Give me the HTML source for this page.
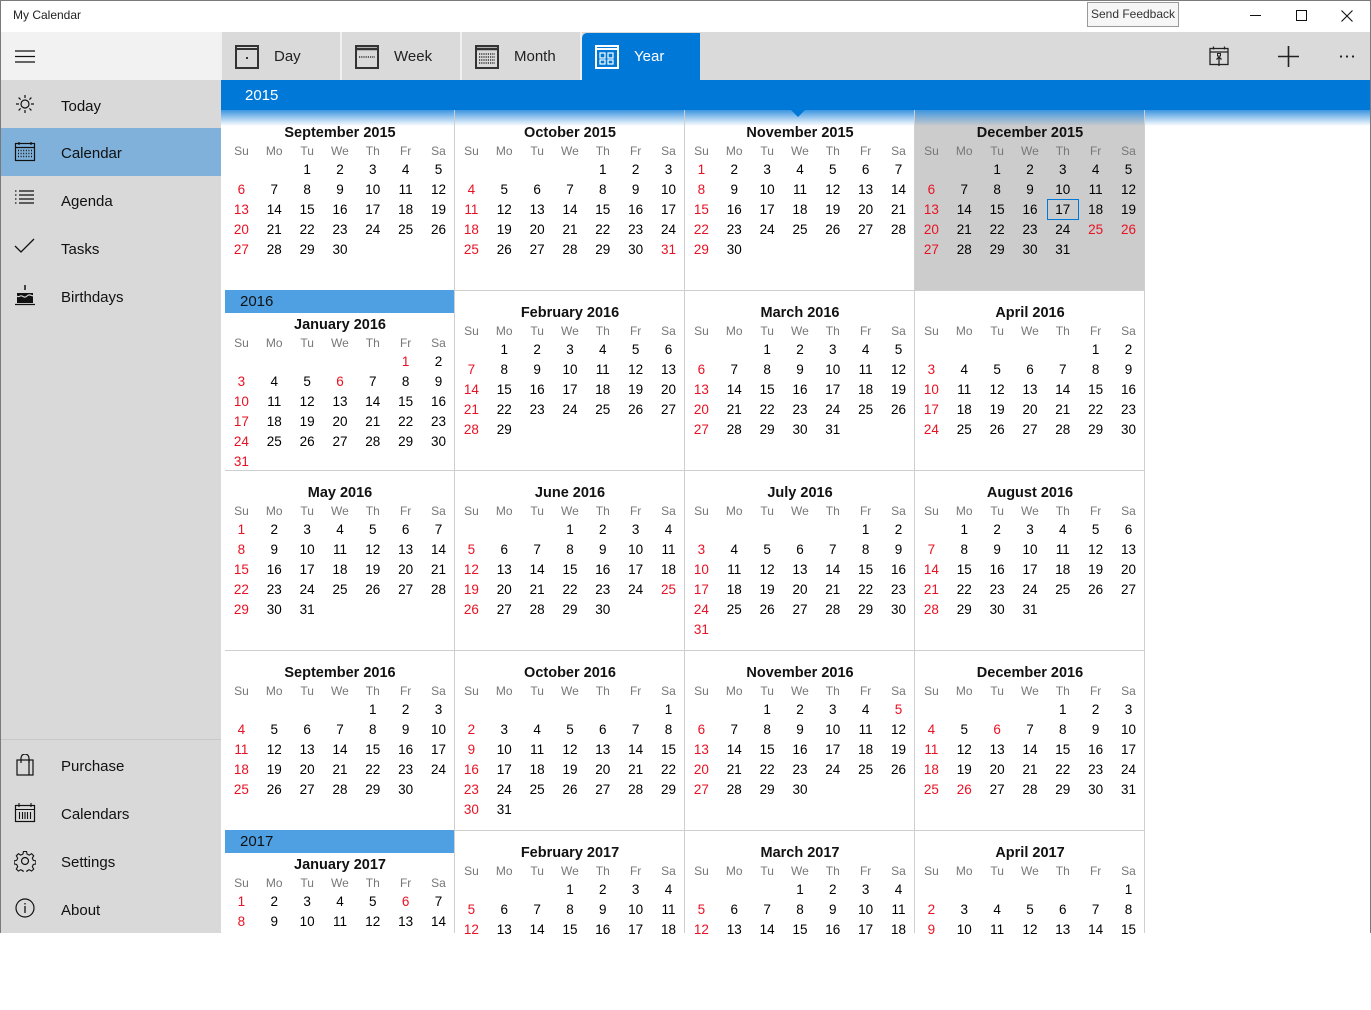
<!DOCTYPE html>
<html><head><meta charset="utf-8"><style>
*{margin:0;padding:0;box-sizing:border-box}
body{width:1371px;height:933px;overflow:hidden;background:#fff;font-family:"Liberation Sans",sans-serif;position:relative;color:#000}
.abs{position:absolute}
#win{position:absolute;left:0;top:0;width:1371px;height:933px;border:1px solid #7a7a7a;border-bottom:none;pointer-events:none;z-index:50}
#side{left:0;top:32px;width:221px;height:901px;background:#d9d9d9}
.it{position:absolute;left:0;width:221px;height:48px;font-size:15px;line-height:52px;padding-left:61px;color:#111}
.it svg{position:absolute;left:14px;top:13px}
.tab{position:absolute;top:33px;height:47px;width:118px;background:#dadada;border-top-left-radius:5px;font-size:15px;line-height:47px;padding-left:52px;color:#222}
.tab svg{position:absolute;left:13px;top:12px}
.m{position:absolute;width:230px;height:180px}
.t{position:absolute;left:0;width:230px;text-align:center;font-weight:bold;font-size:14.5px;line-height:20px;color:#111}
.g{position:absolute;left:0;width:230px;display:grid;grid-template-columns:repeat(7,32.857px);grid-template-rows:18px;grid-auto-rows:20px;font-size:13.5px;text-align:center;line-height:20px}
.g i,.g u{font-style:normal;text-decoration:none}
.g u{color:#e81123}
.g b{font-weight:normal;color:#777;font-size:12px;line-height:17px;height:18px;padding-top:1px}
.vl{position:absolute;top:110px;width:1px;height:823px;background:#cfcfcf}
.hl{position:absolute;left:225px;width:920px;height:1px;background:#cfcfcf}
.yb{position:absolute;left:225px;width:229px;height:23px;background:#4ea0e2;font-size:15px;line-height:24px;padding-left:15px;color:#111}
</style></head><body>
<div id="win"></div>
<div class="abs" style="left:13px;top:8px;font-size:12px;color:#222">My Calendar</div>
<div class="abs" style="left:1087px;top:2px;width:92px;height:25px;border:1px solid #9a9a9a;background:#f6f6f6;font-size:12px;line-height:23px;text-align:center;color:#333">Send Feedback</div>
<div class="abs" style="left:1250px;top:15px;width:11px;height:1px;background:#111"></div>
<div class="abs" style="left:1296px;top:10px;width:11px;height:11px;border:1px solid #111"></div>
<svg class="abs" style="left:1341px;top:10px" width="12" height="12"><path d="M0.5 0.5L11.5 11.5M11.5 0.5L0.5 11.5" stroke="#111" stroke-width="1.1"/></svg>

<div id="side" class="abs">
 <div class="abs" style="left:0;top:0;width:221px;height:48px;background:#f2f2f2"></div>
 <svg class="abs" style="left:15px;top:18px" width="21" height="13"><path d="M0 1H20M0 6.5H20M0 12H20" stroke="#111" stroke-width="1.2"/></svg>
 <div class="it" style="top:49px"><svg width="22" height="22"><circle cx="11" cy="10" r="4" fill="none" stroke="#111" stroke-width="1.2"/><path d="M11 1v3M11 16v3M2 10h3M17 10h3M4.6 3.6l2 2M15.4 14.4l2 2M4.6 16.4l2-2M15.4 5.6l2-2" stroke="#111" stroke-width="1.2"/></svg>Today</div>
 <div class="it" style="top:96px;background:#7fb1da"><svg width="22" height="22"><rect x="1.5" y="2.5" width="19" height="17" fill="none" stroke="#111" stroke-width="1.2"/><path d="M1.5 6.5h19M5 1v3M17 1v3" stroke="#111" stroke-width="1.2"/><path d="M4 9.5h14M4 12.5h14M4 15.5h14" stroke="#111" stroke-width="1.5" stroke-dasharray="1 1.6"/></svg>Calendar</div>
 <div class="it" style="top:144px"><svg width="22" height="22"><path d="M1 3h1.5M5 3h15M1 7h1.5M5 7h15M1 11h1.5M5 11h15M1 15h1.5M5 15h15" stroke="#111" stroke-width="1.2" transform="translate(0,-1)"/></svg>Agenda</div>
 <div class="it" style="top:192px"><svg width="22" height="22"><path d="M1 9l6 6L20 2" fill="none" stroke="#111" stroke-width="1.3"/></svg>Tasks</div>
 <div class="it" style="top:240px"><svg width="22" height="22"><path d="M11 0v5" stroke="#111" stroke-width="1.5"/><rect x="3" y="8" width="16" height="10" fill="#111"/><path d="M3 11c2 2 3-1 5 0s3 2 5 0 3-1 6 0" stroke="#d9d9d9" stroke-width="1.2" fill="none"/><path d="M1 19.5h20" stroke="#111" stroke-width="1.2"/></svg>Birthdays</div>
 <div class="abs" style="left:0;top:707px;width:221px;height:1px;background:#c8c8c8"></div>
 <div class="it" style="top:709px"><svg width="22" height="22"><rect x="3" y="6" width="16" height="15" fill="none" stroke="#111" stroke-width="1.2"/><path d="M7 9V4a4 4 0 0 1 8 0v5" fill="none" stroke="#111" stroke-width="1.2"/><path d="M15 6v15" stroke="#111" stroke-width="1.2"/></svg>Purchase</div>
 <div class="it" style="top:757px"><svg width="22" height="22"><rect x="1.5" y="3.5" width="19" height="16" fill="none" stroke="#111" stroke-width="1.2"/><path d="M1.5 7.5h19M5 1v4M17 1v4M5.5 10v7M8.5 10v7M11 10v7M13.5 10v7M16.5 10v7" stroke="#111" stroke-width="1.1"/></svg>Calendars</div>
 <div class="it" style="top:805px"><svg width="22" height="22"><circle cx="11" cy="11" r="3.5" fill="none" stroke="#111" stroke-width="1.2"/><path d="M9.5 1.5h3l.6 2.6 2.2 1 2.3-1.4 2.1 2.1-1.4 2.3 1 2.2 2.6.6v3l-2.6.6-1 2.2 1.4 2.3-2.1 2.1-2.3-1.4-2.2 1-.6 2.6h-3l-.6-2.6-2.2-1-2.3 1.4-2.1-2.1 1.4-2.3-1-2.2-2.6-.6v-3l2.6-.6 1-2.2-1.4-2.3 2.1-2.1 2.3 1.4 2.2-1z" fill="none" stroke="#111" stroke-width="1.1"/></svg>Settings</div>
 <div class="it" style="top:853px"><svg width="22" height="22"><circle cx="11" cy="10" r="9" fill="none" stroke="#111" stroke-width="1.2"/><path d="M11 8v7M11 5v1.5" stroke="#111" stroke-width="1.3"/></svg>About</div>
</div>

<div class="abs" style="left:221px;top:32px;width:1150px;height:48px;background:#dadada"></div>
<div class="abs" style="left:221px;top:32px;width:1px;height:48px;background:#f0f0f0"></div>
<div class="tab" style="left:222px"><svg width="24" height="24"><rect x="1" y="1" width="22" height="22" fill="none" stroke="#333" stroke-width="2"/><path d="M1 4h22" stroke="#333" stroke-width="2"/><rect x="11" y="12" width="2" height="2" fill="#333"/></svg>Day</div>
<div class="abs" style="left:340px;top:32px;width:2px;height:48px;background:#f0f0f0"></div>
<div class="tab" style="left:342px"><svg width="24" height="24"><rect x="1" y="1" width="22" height="22" fill="none" stroke="#333" stroke-width="2"/><path d="M1 4h22" stroke="#333" stroke-width="2.5"/><path d="M4 12h16" stroke="#333" stroke-width="1.5" stroke-dasharray="1.2 1"/></svg>Week</div>
<div class="abs" style="left:460px;top:32px;width:2px;height:48px;background:#f0f0f0"></div>
<div class="tab" style="left:462px"><svg width="24" height="24"><rect x="1" y="1" width="22" height="22" fill="none" stroke="#333" stroke-width="2"/><path d="M1 4h22" stroke="#333" stroke-width="2.5"/><path d="M4 9h16M4 12h16M4 15h16M4 18h16" stroke="#333" stroke-width="1.5" stroke-dasharray="1.2 1"/></svg>Month</div>
<div class="abs" style="left:580px;top:32px;width:2px;height:48px;background:#f0f0f0"></div>
<div class="tab" style="left:582px;background:#0078d7;color:#fff"><svg width="24" height="24"><rect x="1" y="1" width="22" height="22" fill="none" stroke="#fff" stroke-width="2"/><path d="M1 4h22" stroke="#fff" stroke-width="2"/><rect x="5" y="8" width="5" height="5" fill="none" stroke="#fff" stroke-width="1.2"/><rect x="13" y="8" width="5" height="5" fill="none" stroke="#fff" stroke-width="1.2"/><rect x="5" y="15" width="5" height="4" fill="none" stroke="#fff" stroke-width="1.2"/><rect x="13" y="15" width="5" height="4" fill="none" stroke="#fff" stroke-width="1.2"/></svg>Year</div>
<svg class="abs" style="left:1209px;top:46px" width="20" height="21"><rect x="1" y="2.5" width="18" height="16" fill="none" stroke="#222" stroke-width="1.3"/><path d="M1 6h18M4.5 0.5v3M15.5 0.5v3M10 20v-9M7.5 13.5l2.5-2.5 2.5 2.5" fill="none" stroke="#222" stroke-width="1.3"/><rect x="8.5" y="7.5" width="3" height="2.5" fill="none" stroke="#222" stroke-width="1"/></svg>
<svg class="abs" style="left:1278px;top:46px" width="21" height="21"><path d="M10.5 0v21M0 10.5h21" stroke="#222" stroke-width="1.6"/></svg>
<div class="abs" style="left:1338px;top:55px;width:18px;height:3px;background:radial-gradient(circle,#222 1px,transparent 1.3px) 0 0/6px 3px"></div>

<div class="abs" style="left:221px;top:80px;width:1150px;height:30px;background:#0078d7;color:#fff;font-size:15px;line-height:32px;padding-left:24px">2015</div>
<div class="abs" style="left:221px;top:110px;width:1150px;height:16px;background:linear-gradient(#3c95e0,rgba(255,255,255,0))"></div>
<svg class="abs" style="left:791px;top:110px" width="14" height="7"><path d="M0 0h14L7 7z" fill="#0078d7"/></svg>

<div class="abs" style="left:915px;top:110px;width:229px;height:180px;background:#cccccc"></div>
<div class="abs" style="left:915px;top:110px;width:229px;height:16px;background:linear-gradient(#3c95e0,rgba(204,204,204,0))"></div>

<div class="vl" style="left:454px"></div><div class="vl" style="left:684px"></div><div class="vl" style="left:914px"></div><div class="vl" style="left:1144px"></div>
<div class="hl" style="top:290px"></div><div class="hl" style="top:470px"></div><div class="hl" style="top:650px"></div><div class="hl" style="top:830px"></div>
<div class="yb" style="top:290px">2016</div>
<div class="yb" style="top:830px">2017</div>
<div class="abs" style="left:1047px;top:199px;width:32px;height:21px;border:1px solid #0078d7"></div>

<div class="m" style="left:225px;top:110px"><div class="t" style="top:13px">September 2015</div><div class="g" style="top:32px"><b>Su</b><b>Mo</b><b>Tu</b><b>We</b><b>Th</b><b>Fr</b><b>Sa</b><i style="grid-column-start:3">1</i><i>2</i><i>3</i><i>4</i><i>5</i><u>6</u><i>7</i><i>8</i><i>9</i><i>10</i><i>11</i><i>12</i><u>13</u><i>14</i><i>15</i><i>16</i><i>17</i><i>18</i><i>19</i><u>20</u><i>21</i><i>22</i><i>23</i><i>24</i><i>25</i><i>26</i><u>27</u><i>28</i><i>29</i><i>30</i></div></div>
<div class="m" style="left:455px;top:110px"><div class="t" style="top:13px">October 2015</div><div class="g" style="top:32px"><b>Su</b><b>Mo</b><b>Tu</b><b>We</b><b>Th</b><b>Fr</b><b>Sa</b><i style="grid-column-start:5">1</i><i>2</i><i>3</i><u>4</u><i>5</i><i>6</i><i>7</i><i>8</i><i>9</i><i>10</i><u>11</u><i>12</i><i>13</i><i>14</i><i>15</i><i>16</i><i>17</i><u>18</u><i>19</i><i>20</i><i>21</i><i>22</i><i>23</i><i>24</i><u>25</u><i>26</i><i>27</i><i>28</i><i>29</i><i>30</i><u>31</u></div></div>
<div class="m" style="left:685px;top:110px"><div class="t" style="top:13px">November 2015</div><div class="g" style="top:32px"><b>Su</b><b>Mo</b><b>Tu</b><b>We</b><b>Th</b><b>Fr</b><b>Sa</b><u>1</u><i>2</i><i>3</i><i>4</i><i>5</i><i>6</i><i>7</i><u>8</u><i>9</i><i>10</i><i>11</i><i>12</i><i>13</i><i>14</i><u>15</u><i>16</i><i>17</i><i>18</i><i>19</i><i>20</i><i>21</i><u>22</u><i>23</i><i>24</i><i>25</i><i>26</i><i>27</i><i>28</i><u>29</u><i>30</i></div></div>
<div class="m" style="left:915px;top:110px"><div class="t" style="top:13px">December 2015</div><div class="g" style="top:32px"><b>Su</b><b>Mo</b><b>Tu</b><b>We</b><b>Th</b><b>Fr</b><b>Sa</b><i style="grid-column-start:3">1</i><i>2</i><i>3</i><i>4</i><i>5</i><u>6</u><i>7</i><i>8</i><i>9</i><i>10</i><i>11</i><i>12</i><u>13</u><i>14</i><i>15</i><i>16</i><i>17</i><i>18</i><i>19</i><u>20</u><i>21</i><i>22</i><i>23</i><i>24</i><u>25</u><u>26</u><u>27</u><i>28</i><i>29</i><i>30</i><i>31</i></div></div>

<div class="m" style="left:225px;top:290px"><div class="t" style="top:25px">January 2016</div><div class="g" style="top:44px"><b>Su</b><b>Mo</b><b>Tu</b><b>We</b><b>Th</b><b>Fr</b><b>Sa</b><u style="grid-column-start:6">1</u><i>2</i><u>3</u><i>4</i><i>5</i><u>6</u><i>7</i><i>8</i><i>9</i><u>10</u><i>11</i><i>12</i><i>13</i><i>14</i><i>15</i><i>16</i><u>17</u><i>18</i><i>19</i><i>20</i><i>21</i><i>22</i><i>23</i><u>24</u><i>25</i><i>26</i><i>27</i><i>28</i><i>29</i><i>30</i><u>31</u></div></div>
<div class="m" style="left:455px;top:290px"><div class="t" style="top:13px">February 2016</div><div class="g" style="top:32px"><b>Su</b><b>Mo</b><b>Tu</b><b>We</b><b>Th</b><b>Fr</b><b>Sa</b><i style="grid-column-start:2">1</i><i>2</i><i>3</i><i>4</i><i>5</i><i>6</i><u>7</u><i>8</i><i>9</i><i>10</i><i>11</i><i>12</i><i>13</i><u>14</u><i>15</i><i>16</i><i>17</i><i>18</i><i>19</i><i>20</i><u>21</u><i>22</i><i>23</i><i>24</i><i>25</i><i>26</i><i>27</i><u>28</u><i>29</i></div></div>
<div class="m" style="left:685px;top:290px"><div class="t" style="top:13px">March 2016</div><div class="g" style="top:32px"><b>Su</b><b>Mo</b><b>Tu</b><b>We</b><b>Th</b><b>Fr</b><b>Sa</b><i style="grid-column-start:3">1</i><i>2</i><i>3</i><i>4</i><i>5</i><u>6</u><i>7</i><i>8</i><i>9</i><i>10</i><i>11</i><i>12</i><u>13</u><i>14</i><i>15</i><i>16</i><i>17</i><i>18</i><i>19</i><u>20</u><i>21</i><i>22</i><i>23</i><i>24</i><i>25</i><i>26</i><u>27</u><i>28</i><i>29</i><i>30</i><i>31</i></div></div>
<div class="m" style="left:915px;top:290px"><div class="t" style="top:13px">April 2016</div><div class="g" style="top:32px"><b>Su</b><b>Mo</b><b>Tu</b><b>We</b><b>Th</b><b>Fr</b><b>Sa</b><i style="grid-column-start:6">1</i><i>2</i><u>3</u><i>4</i><i>5</i><i>6</i><i>7</i><i>8</i><i>9</i><u>10</u><i>11</i><i>12</i><i>13</i><i>14</i><i>15</i><i>16</i><u>17</u><i>18</i><i>19</i><i>20</i><i>21</i><i>22</i><i>23</i><u>24</u><i>25</i><i>26</i><i>27</i><i>28</i><i>29</i><i>30</i></div></div>

<div class="m" style="left:225px;top:470px"><div class="t" style="top:13px">May 2016</div><div class="g" style="top:32px"><b>Su</b><b>Mo</b><b>Tu</b><b>We</b><b>Th</b><b>Fr</b><b>Sa</b><u>1</u><i>2</i><i>3</i><i>4</i><i>5</i><i>6</i><i>7</i><u>8</u><i>9</i><i>10</i><i>11</i><i>12</i><i>13</i><i>14</i><u>15</u><i>16</i><i>17</i><i>18</i><i>19</i><i>20</i><i>21</i><u>22</u><i>23</i><i>24</i><i>25</i><i>26</i><i>27</i><i>28</i><u>29</u><i>30</i><i>31</i></div></div>
<div class="m" style="left:455px;top:470px"><div class="t" style="top:13px">June 2016</div><div class="g" style="top:32px"><b>Su</b><b>Mo</b><b>Tu</b><b>We</b><b>Th</b><b>Fr</b><b>Sa</b><i style="grid-column-start:4">1</i><i>2</i><i>3</i><i>4</i><u>5</u><i>6</i><i>7</i><i>8</i><i>9</i><i>10</i><i>11</i><u>12</u><i>13</i><i>14</i><i>15</i><i>16</i><i>17</i><i>18</i><u>19</u><i>20</i><i>21</i><i>22</i><i>23</i><i>24</i><u>25</u><u>26</u><i>27</i><i>28</i><i>29</i><i>30</i></div></div>
<div class="m" style="left:685px;top:470px"><div class="t" style="top:13px">July 2016</div><div class="g" style="top:32px"><b>Su</b><b>Mo</b><b>Tu</b><b>We</b><b>Th</b><b>Fr</b><b>Sa</b><i style="grid-column-start:6">1</i><i>2</i><u>3</u><i>4</i><i>5</i><i>6</i><i>7</i><i>8</i><i>9</i><u>10</u><i>11</i><i>12</i><i>13</i><i>14</i><i>15</i><i>16</i><u>17</u><i>18</i><i>19</i><i>20</i><i>21</i><i>22</i><i>23</i><u>24</u><i>25</i><i>26</i><i>27</i><i>28</i><i>29</i><i>30</i><u>31</u></div></div>
<div class="m" style="left:915px;top:470px"><div class="t" style="top:13px">August 2016</div><div class="g" style="top:32px"><b>Su</b><b>Mo</b><b>Tu</b><b>We</b><b>Th</b><b>Fr</b><b>Sa</b><i style="grid-column-start:2">1</i><i>2</i><i>3</i><i>4</i><i>5</i><i>6</i><u>7</u><i>8</i><i>9</i><i>10</i><i>11</i><i>12</i><i>13</i><u>14</u><i>15</i><i>16</i><i>17</i><i>18</i><i>19</i><i>20</i><u>21</u><i>22</i><i>23</i><i>24</i><i>25</i><i>26</i><i>27</i><u>28</u><i>29</i><i>30</i><i>31</i></div></div>

<div class="m" style="left:225px;top:650px"><div class="t" style="top:13px">September 2016</div><div class="g" style="top:32px"><b>Su</b><b>Mo</b><b>Tu</b><b>We</b><b>Th</b><b>Fr</b><b>Sa</b><i style="grid-column-start:5">1</i><i>2</i><i>3</i><u>4</u><i>5</i><i>6</i><i>7</i><i>8</i><i>9</i><i>10</i><u>11</u><i>12</i><i>13</i><i>14</i><i>15</i><i>16</i><i>17</i><u>18</u><i>19</i><i>20</i><i>21</i><i>22</i><i>23</i><i>24</i><u>25</u><i>26</i><i>27</i><i>28</i><i>29</i><i>30</i></div></div>
<div class="m" style="left:455px;top:650px"><div class="t" style="top:13px">October 2016</div><div class="g" style="top:32px"><b>Su</b><b>Mo</b><b>Tu</b><b>We</b><b>Th</b><b>Fr</b><b>Sa</b><i style="grid-column-start:7">1</i><u>2</u><i>3</i><i>4</i><i>5</i><i>6</i><i>7</i><i>8</i><u>9</u><i>10</i><i>11</i><i>12</i><i>13</i><i>14</i><i>15</i><u>16</u><i>17</i><i>18</i><i>19</i><i>20</i><i>21</i><i>22</i><u>23</u><i>24</i><i>25</i><i>26</i><i>27</i><i>28</i><i>29</i><u>30</u><i>31</i></div></div>
<div class="m" style="left:685px;top:650px"><div class="t" style="top:13px">November 2016</div><div class="g" style="top:32px"><b>Su</b><b>Mo</b><b>Tu</b><b>We</b><b>Th</b><b>Fr</b><b>Sa</b><i style="grid-column-start:3">1</i><i>2</i><i>3</i><i>4</i><u>5</u><u>6</u><i>7</i><i>8</i><i>9</i><i>10</i><i>11</i><i>12</i><u>13</u><i>14</i><i>15</i><i>16</i><i>17</i><i>18</i><i>19</i><u>20</u><i>21</i><i>22</i><i>23</i><i>24</i><i>25</i><i>26</i><u>27</u><i>28</i><i>29</i><i>30</i></div></div>
<div class="m" style="left:915px;top:650px"><div class="t" style="top:13px">December 2016</div><div class="g" style="top:32px"><b>Su</b><b>Mo</b><b>Tu</b><b>We</b><b>Th</b><b>Fr</b><b>Sa</b><i style="grid-column-start:5">1</i><i>2</i><i>3</i><u>4</u><i>5</i><u>6</u><i>7</i><i>8</i><i>9</i><i>10</i><u>11</u><i>12</i><i>13</i><i>14</i><i>15</i><i>16</i><i>17</i><u>18</u><i>19</i><i>20</i><i>21</i><i>22</i><i>23</i><i>24</i><u>25</u><u>26</u><i>27</i><i>28</i><i>29</i><i>30</i><i>31</i></div></div>

<div class="m" style="left:225px;top:830px"><div class="t" style="top:25px">January 2017</div><div class="g" style="top:44px"><b>Su</b><b>Mo</b><b>Tu</b><b>We</b><b>Th</b><b>Fr</b><b>Sa</b><u>1</u><i>2</i><i>3</i><i>4</i><i>5</i><u>6</u><i>7</i><u>8</u><i>9</i><i>10</i><i>11</i><i>12</i><i>13</i><i>14</i></div></div>
<div class="m" style="left:455px;top:830px"><div class="t" style="top:13px">February 2017</div><div class="g" style="top:32px"><b>Su</b><b>Mo</b><b>Tu</b><b>We</b><b>Th</b><b>Fr</b><b>Sa</b><i style="grid-column-start:4">1</i><i>2</i><i>3</i><i>4</i><u>5</u><i>6</i><i>7</i><i>8</i><i>9</i><i>10</i><i>11</i><u>12</u><i>13</i><i>14</i><i>15</i><i>16</i><i>17</i><i>18</i></div></div>
<div class="m" style="left:685px;top:830px"><div class="t" style="top:13px">March 2017</div><div class="g" style="top:32px"><b>Su</b><b>Mo</b><b>Tu</b><b>We</b><b>Th</b><b>Fr</b><b>Sa</b><i style="grid-column-start:4">1</i><i>2</i><i>3</i><i>4</i><u>5</u><i>6</i><i>7</i><i>8</i><i>9</i><i>10</i><i>11</i><u>12</u><i>13</i><i>14</i><i>15</i><i>16</i><i>17</i><i>18</i></div></div>
<div class="m" style="left:915px;top:830px"><div class="t" style="top:13px">April 2017</div><div class="g" style="top:32px"><b>Su</b><b>Mo</b><b>Tu</b><b>We</b><b>Th</b><b>Fr</b><b>Sa</b><i style="grid-column-start:7">1</i><u>2</u><i>3</i><i>4</i><i>5</i><i>6</i><i>7</i><i>8</i><u>9</u><i>10</i><i>11</i><i>12</i><i>13</i><i>14</i><i>15</i></div></div>
</body></html>
